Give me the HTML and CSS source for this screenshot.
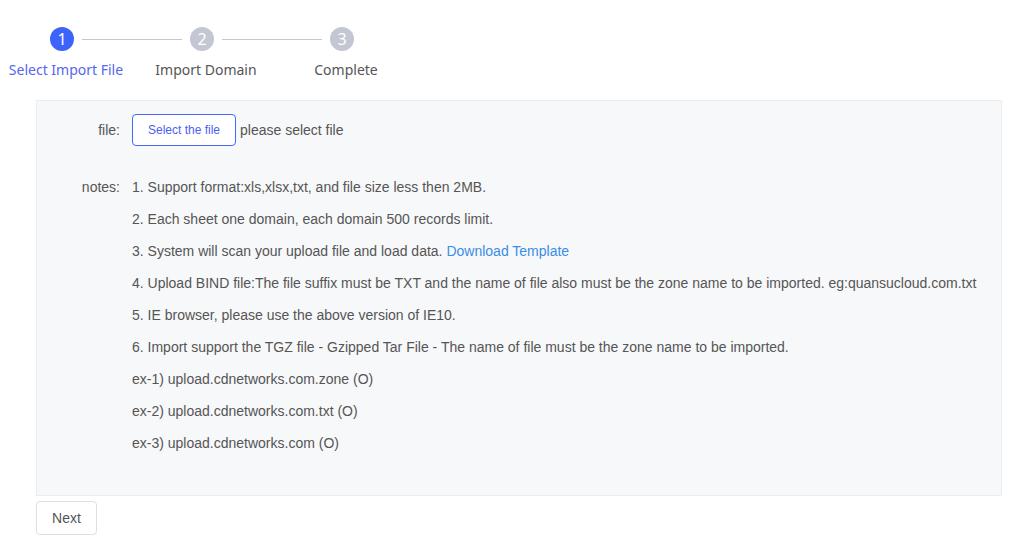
FILE: index.html
```html
<!DOCTYPE html>
<html>
<head>
<meta charset="utf-8">
<link rel="stylesheet" href="styles.css">
</head>
<body>
<div class="steps">
  <div class="step active">
    <div class="head"><span class="num">1</span><span class="line"></span></div>
    <div class="title">Select Import File</div>
  </div>
  <div class="step">
    <div class="head"><span class="num">2</span><span class="line"></span></div>
    <div class="title">Import Domain</div>
  </div>
  <div class="step last">
    <div class="head"><span class="num">3</span></div>
    <div class="title">Complete</div>
  </div>
</div>
<div class="panel">
  <div class="row file-row">
    <div class="label">file:</div>
    <div class="content">
      <button class="select-btn">Select the file</button>
      <span class="hint">please select file</span>
    </div>
  </div>
  <div class="row notes-row">
    <div class="label">notes:</div>
    <div class="content notes">
      <p>1. Support format:xls,xlsx,txt, and file size less then 2MB.</p>
      <p>2. Each sheet one domain, each domain 500 records limit.</p>
      <p>3. System will scan your upload file and load data. <a class="link">Download Template</a></p>
      <p>4. Upload BIND file:The file suffix must be TXT and the name of file also must be the zone name to be imported. eg:quansucloud.com.txt</p>
      <p>5. IE browser, please use the above version of IE10.</p>
      <p>6. Import support the TGZ file - Gzipped Tar File - The name of file must be the zone name to be imported.</p>
      <p>ex-1) upload.cdnetworks.com.zone (O)</p>
      <p>ex-2) upload.cdnetworks.com.txt (O)</p>
      <p>ex-3) upload.cdnetworks.com (O)</p>
    </div>
  </div>
</div>
<button class="next-btn">Next</button>
</body>
</html>
```
FILE: styles.css
```css
* { box-sizing: border-box; }
html, body { margin: 0; padding: 0; background: #fff; }
body {
  font-family: "Liberation Sans", Arial, sans-serif;
  font-size: 14px;
  color: #555;
  padding: 27px 0 0 36px;
  width: 1015px;
  height: 546px;
  overflow: hidden;
}
.steps {
  display: flex;
  margin-left: -28px;
}
.step {
  width: 140px;
  display: flex;
  flex-direction: column;
}
.head {
  display: flex;
  align-items: center;
  padding-left: 42px;
  height: 24px;
}
.num {
  width: 24px;
  height: 24px;
  border-radius: 50%;
  background: #c3c7d4;
  color: #fff;
  font-family: "Noto Sans", sans-serif;
  font-size: 16px;
  line-height: 24px;
  text-align: center;
  flex: none;
}
.step.active .num { background: #3d63fa; }
.line {
  flex: none;
  width: 100px;
  height: 1px;
  background: #c3c7d4;
  margin-left: 8px;
}
.title {
  display: flex;
  justify-content: center;
  margin-top: 9px;
  margin-left: -12px;
  width: 140px;
  font-family: "Noto Sans", sans-serif;
  font-size: 14px;
  line-height: 20px;
  color: #555;
  white-space: nowrap;
}
.step.active .title { color: #5566f0; }

.panel {
  margin-top: 20px;
  width: 966px;
  height: 396px;
  background: #f7f8fa;
  border: 1px solid #eaecef;
  padding-top: 13px;
}
.row { display: flex; }
.label {
  width: 83px;
  text-align: right;
  color: #555;
  flex: none;
}
.file-row .label { line-height: 32px; }
.content { margin-left: 12px; }
.file-row .content { display: flex; align-items: center; }
.select-btn {
  width: 104px;
  height: 32px;
  border: 1px solid #4667f5;
  border-radius: 4px;
  background: #fff;
  color: #4a62ef;
  font-family: "Liberation Sans", Arial, sans-serif;
  font-size: 12px;
  padding: 0;
}
.hint { margin-left: 4px; color: #555; }
.notes-row { margin-top: 31px; }
.notes-row .label { line-height: 20px; }
.notes p {
  margin: 0 0 12px 0;
  line-height: 20px;
  white-space: nowrap;
}
.link { color: #3a8ee6; }
.next-btn {
  margin-top: 5px;
  width: 61px;
  height: 34px;
  border: 1px solid #dcdfe6;
  border-radius: 4px;
  background: #fff;
  color: #555;
  font-family: "Liberation Sans", Arial, sans-serif;
  font-size: 14px;
  padding: 0;
}
```
